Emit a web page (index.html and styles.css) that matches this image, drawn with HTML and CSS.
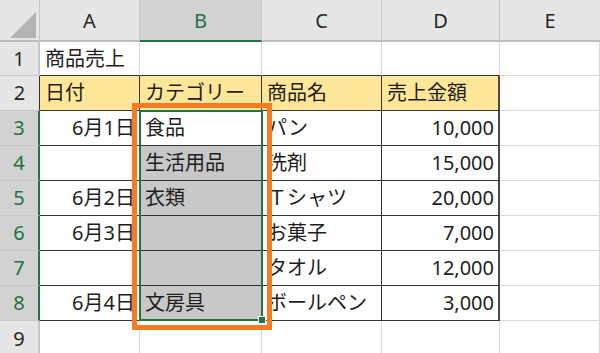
FILE: index.html
```html
<!DOCTYPE html>
<html lang="ja">
<head>
<meta charset="utf-8">
<link rel="stylesheet" href="styles.css">
</head>
<body>
<div class="sheet">
  <div class="grid">
    <div class="corner"><span class="tri"></span></div>
    <div class="ch">A</div>
    <div class="ch sel">B</div>
    <div class="ch">C</div>
    <div class="ch">D</div>
    <div class="ch last">E</div>

    <div class="rh r1">1</div>
    <div class="c r1">商品売上</div>
    <div class="c r1"></div>
    <div class="c r1"></div>
    <div class="c r1"></div>
    <div class="c r1e"></div>

    <div class="rh r2 tleft">2</div>
    <div class="c t hd">日付</div>
    <div class="c t hd">カテゴリー</div>
    <div class="c t hd">商品名</div>
    <div class="c t hd dlast">売上金額</div>
    <div class="c"></div>

    <div class="rh rs">3</div>
    <div class="c t num">6月1日</div>
    <div class="c t act">食品</div>
    <div class="c t">パン</div>
    <div class="c t num dlast">10,000</div>
    <div class="c"></div>

    <div class="rh rs">4</div>
    <div class="c t num"></div>
    <div class="c t gray">生活用品</div>
    <div class="c t">洗剤</div>
    <div class="c t num dlast">15,000</div>
    <div class="c"></div>

    <div class="rh rs">5</div>
    <div class="c t num">6月2日</div>
    <div class="c t gray">衣類</div>
    <div class="c t">Ｔシャツ</div>
    <div class="c t num dlast">20,000</div>
    <div class="c"></div>

    <div class="rh rs">6</div>
    <div class="c t num">6月3日</div>
    <div class="c t gray"></div>
    <div class="c t">お菓子</div>
    <div class="c t num dlast">7,000</div>
    <div class="c"></div>

    <div class="rh rs">7</div>
    <div class="c t num"></div>
    <div class="c t gray"></div>
    <div class="c t">タオル</div>
    <div class="c t num dlast">12,000</div>
    <div class="c"></div>

    <div class="rh rs">8</div>
    <div class="c t num">6月4日</div>
    <div class="c t gray">文房具</div>
    <div class="c t">ボールペン</div>
    <div class="c t num dlast">3,000</div>
    <div class="c"></div>

    <div class="rh r9">9</div>
    <div class="c r9"></div>
    <div class="c r9"></div>
    <div class="c r9"></div>
    <div class="c r9"></div>
    <div class="c r9"></div>
  </div>
  <div class="selbox"><span class="handle"></span></div>
  <div class="hilite"></div>
</div>
</body>
</html>
```
FILE: styles.css
```css
html, body {
  margin: 0;
  padding: 0;
  background: #ffffff;
}
.sheet {
  position: relative;
  width: 600px;
  height: 353px;
  overflow: hidden;
  font-family: "Noto Sans", "Noto Sans CJK JP", sans-serif;
  font-size: 20px;
  color: #1e1e1e;
}
.grid {
  display: grid;
  grid-template-columns: 40px 100px 122px 120px 118px 100px;
  grid-template-rows: 42px 34px repeat(7, 35px) 35px;
}
.grid > div {
  box-sizing: border-box;
  display: flex;
  align-items: center;
  line-height: 1;
}
.corner {
  position: relative;
  background: #e6e6e6;
  border-right: 1px solid #c8c8c8;
  border-bottom: 2px solid #bdbdbd;
}
.tri {
  position: absolute;
  left: 10px;
  top: 12px;
  width: 26px;
  height: 26px;
  background: #b4b4b4;
  clip-path: polygon(100% 0, 100% 100%, 0 100%);
}
.ch {
  justify-content: center;
  background: #e6e6e6;
  border-right: 1px solid #c8c8c8;
  border-bottom: 2px solid #bdbdbd;
  color: #262626;
  padding-top: 2px;
}
.ch.sel {
  background: #d2d2d2;
  color: #217346;
  border-bottom-color: #217346;
}
.ch.last {
  border-right: none;
}
.rh {
  justify-content: center;
  background: #e6e6e6;
  border-right: 2px solid #c8c8c8;
  border-bottom: 1px solid #c8c8c8;
  color: #262626;
}
.rh.tleft {
  border-right: 1px solid #333333;
}
.rh.rs {
  background: #d2d2d2;
  color: #217346;
  border-right: 2px solid #217346;
}
.rh.r9 {
  border-bottom: none;
}
.c, .r1e {
  padding: 0 5px;
  border-right: 1px solid #d9d9d9;
  border-bottom: 1px solid #d9d9d9;
  white-space: nowrap;
}
.c.r1 {
  border-bottom-color: #333333;
}
.c.t {
  border-right: 1px solid #333333;
  border-bottom: 1px solid #333333;
}
.c.hd {
  background: #ffe699;
}
.c.dlast {
  border-right: 2px solid #4a4a4a;
}
.c.num {
  justify-content: flex-end;
  padding-right: 4px;
}
.c.gray {
  background: #c8c8c8;
}
.c.act {
  background: #ffffff;
}
.c.r9 {
  border-bottom: none;
}
.selbox {
  position: absolute;
  left: 139px;
  top: 110px;
  width: 124px;
  height: 211px;
  box-sizing: border-box;
  border: 2px solid #217346;
}
.handle {
  position: absolute;
  right: -5px;
  bottom: -5px;
  width: 6px;
  height: 6px;
  background: #217346;
  border: 1px solid #ffffff;
}
.hilite {
  position: absolute;
  left: 132px;
  top: 103px;
  width: 140px;
  height: 227px;
  box-sizing: border-box;
  border: 5px solid #f57c22;
}
```
